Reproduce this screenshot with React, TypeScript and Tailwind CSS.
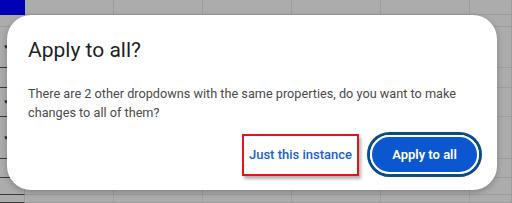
import React from 'react';

const cols = [25, 89, 89, 89, 89, 89, 42];
const rows = [15, 12, 41, 20, 29, 42, 19, 17, 8];

function Sheet() {
  return (
    <div
      className="grid h-full w-full"
      style={{
        gridTemplateColumns: cols.map((c) => `${c}px`).join(' '),
        gridTemplateRows: rows.map((r) => `${r}px`).join(' '),
      }}
    >
      {rows.map((_, r) =>
        cols.map((_, c) => {
          const first = c === 0;
          const corner = r === 0 && first;
          const blueLine = first && r === 2;
          const hasArrow = first && (r === 2 || r === 4 || r === 5);
          return (
            <div
              key={`${r}-${c}`}
              className={`relative border-r border-b ${
                corner ? 'bg-[#0000b4] border-[#0000b4]' : 'bg-[#acacac] border-[#9d9d9d]'
              } ${blueLine ? 'border-b-[#1a4fb0]' : ''} ${first && r > 1 ? 'border-b-[#3a3a3a]' : ''}`}
            >
              {hasArrow ? (
                <span className="absolute left-[3px] top-1/2 -translate-y-1/2 text-[6px] leading-none text-[#222]">▼</span>
              ) : null}
            </div>
          );
        })
      )}
    </div>
  );
}

export default function App() {
  return (
    <div className="relative h-[203px] w-[512px] overflow-hidden bg-[#acacac] font-['Roboto',sans-serif]">
      <Sheet />
      <div className="absolute left-[7px] top-[15px] flex h-[175px] w-[490px] flex-col rounded-[24px] bg-white pl-[21px] pr-[15px] pt-[21px] shadow-[0_2px_6px_rgba(0,0,0,0.25)]">
        <h2 className="text-[21px] leading-[28px] text-[#1f1f1f]">Apply to all?</h2>
        <p className="mt-[20px] text-[12.7px] leading-[19px] text-[#4a4a4a]">
          There are 2 other dropdowns with the same properties, do you want to make
          <br />
          changes to all of them?
        </p>
        <div className="mt-auto mb-[13px] flex items-center justify-end gap-[8px]">
          <div className="flex h-[42px] w-[117px] items-center justify-center border-2 border-[#e0161c] shadow-[2px_3px_3px_rgba(0,0,0,0.3)]">
            <span className="text-[13px] font-medium text-[#1a5fd6]">Just this instance</span>
          </div>
          <button className="flex h-[45px] w-[115px] items-center justify-center rounded-full border-[3px] border-[#0a4c8a] p-0">
            <span className="flex h-full w-full items-center justify-center rounded-full border-2 border-white bg-[#0b57d0] text-[13px] font-semibold text-white">
              Apply to all
            </span>
          </button>
        </div>
      </div>
    </div>
  );
}
